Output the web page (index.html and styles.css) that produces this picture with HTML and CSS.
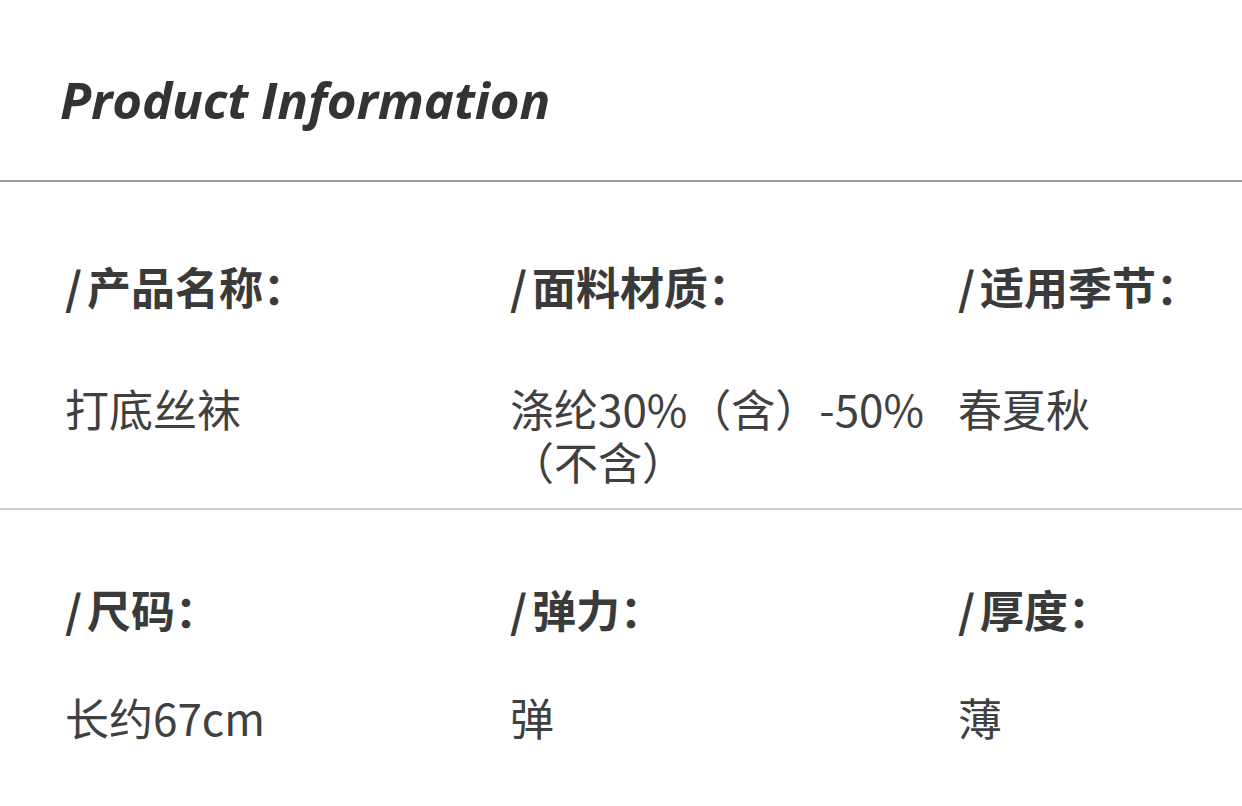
FILE: index.html
```html
<!DOCTYPE html>
<html lang="zh-CN">
<head>
<meta charset="utf-8">
<title>Product Information</title>
<link rel="stylesheet" href="styles.css">
</head>
<body>
<div class="page">
  <header class="header">
    <h1 class="title">Product Information</h1>
  </header>
  <section class="row row-first">
    <div class="cell">
      <div class="label"><span class="slash">/</span>产品名称：</div>
      <div class="value">打底丝袜</div>
    </div>
    <div class="cell">
      <div class="label"><span class="slash">/</span>面料材质：</div>
      <div class="value">涤纶30%（含）-50%（不含）</div>
    </div>
    <div class="cell">
      <div class="label"><span class="slash">/</span>适用季节：</div>
      <div class="value">春夏秋</div>
    </div>
  </section>
  <section class="row row-second">
    <div class="cell">
      <div class="label"><span class="slash">/</span>尺码：</div>
      <div class="value">长约67cm</div>
    </div>
    <div class="cell">
      <div class="label"><span class="slash">/</span>弹力：</div>
      <div class="value">弹</div>
    </div>
    <div class="cell">
      <div class="label"><span class="slash">/</span>厚度：</div>
      <div class="value">薄</div>
    </div>
  </section>
</div>
</body>
</html>
```

FILE: styles.css
```css
html, body {
  margin: 0;
  padding: 0;
  background: #ffffff;
}

.page {
  width: 1242px;
  height: 806px;
  overflow: hidden;
  font-family: "Noto Sans CJK SC", "Noto Sans", sans-serif;
  color: #3d3d3d;
}

.header {
  height: 182px;
  border-bottom: 2px solid #9a9a9a;
  display: flex;
  align-items: center;
  padding-left: 60px;
  padding-top: 18px;
  box-sizing: border-box;
}

.title {
  margin: 0;
  font-family: "Open Sans", "Noto Sans", sans-serif;
  font-style: italic;
  font-weight: 700;
  font-size: 51px;
  line-height: 1;
  color: #333333;
  letter-spacing: -0.15px;
}

.row {
  display: grid;
  grid-template-columns: 445px 448px 1fr;
  padding-left: 65px;
}

.row-first {
  padding-top: 78px;
  padding-bottom: 20px;
  border-bottom: 2px solid #cccccc;
}

.row-second {
  padding-top: 73px;
}

.cell {
  display: flex;
  flex-direction: column;
}

.label {
  font-size: 44px;
  font-weight: 700;
  line-height: 53px;
  color: #3a3a3a;
}

.slash {
  display: inline-block;
  margin-right: 5px;
}

.value {
  font-size: 44px;
  font-weight: 400;
  line-height: 53px;
  color: #404040;
}

.row-first .value {
  margin-top: 69px;
}

.row-second .value {
  margin-top: 55px;
}
```
